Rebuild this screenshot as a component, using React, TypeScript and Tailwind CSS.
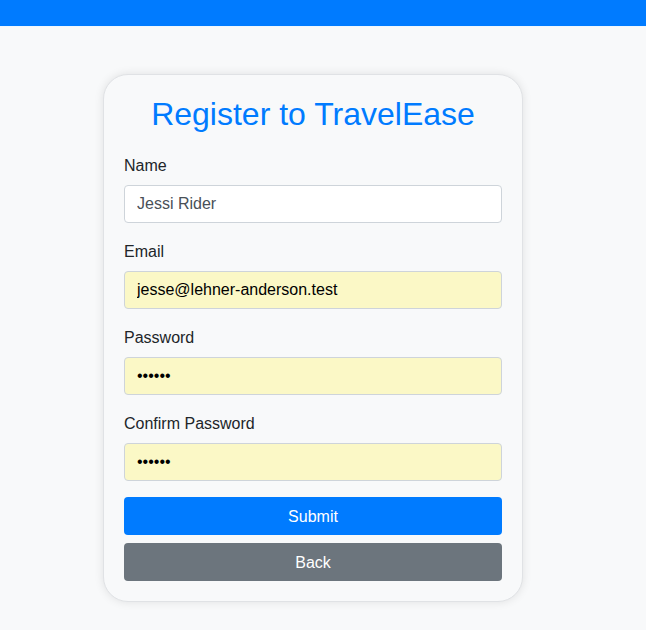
export default function App() {
  const fields = [
    { label: 'Name', value: 'Jessi Rider', type: 'text', filled: false },
    { label: 'Email', value: 'jesse@lehner-anderson.test', type: 'email', filled: true },
    { label: 'Password', value: 'secret', type: 'password', filled: true },
    { label: 'Confirm Password', value: 'secret', type: 'password', filled: true },
  ];

  return (
    <div className="min-h-screen bg-[#f8f9fa] font-['Liberation_Sans',Arial,sans-serif] text-[#212529]">
      <div className="h-[27px] bg-[#007bff] border-b border-[#eef7ff]" />

      <main className="pt-[47px] pl-[103px]">
        <div className="w-[420px] rounded-[25px] border border-[#e0e2e5] bg-[#f8f9fa] p-5 shadow-[0_0_10px_rgba(0,0,0,0.1)]">
          <h2 className="mb-5 text-center text-[32px] leading-[38px] text-[#007bff]">Register to TravelEase</h2>

          <form onSubmit={(e) => e.preventDefault()}>
            {fields.map((field) => (
              <div key={field.label} className="mb-4">
                <label className="mb-2 block pt-px text-base leading-6">{field.label}</label>
                <input
                  type={field.type}
                  defaultValue={field.value}
                  className={
                    field.filled
                      ? 'block -mt-px h-[38px] w-full rounded border border-[#ced4da] bg-[#fbf8c6] px-3 text-base text-black outline-none'
                      : 'block -mt-px h-[38px] w-full rounded border border-[#ced4da] bg-white px-3 text-base text-[#495057] outline-none'
                  }
                />
              </div>
            ))}

            <div className="flex flex-col gap-2">
              <button type="submit" className="h-[38px] w-full rounded bg-[#007bff] pt-px text-base text-white">
                Submit
              </button>
              <button type="button" className="h-[38px] w-full rounded bg-[#6c757d] pt-px text-base text-white">
                Back
              </button>
            </div>
          </form>
        </div>
      </main>
    </div>
  );
}
